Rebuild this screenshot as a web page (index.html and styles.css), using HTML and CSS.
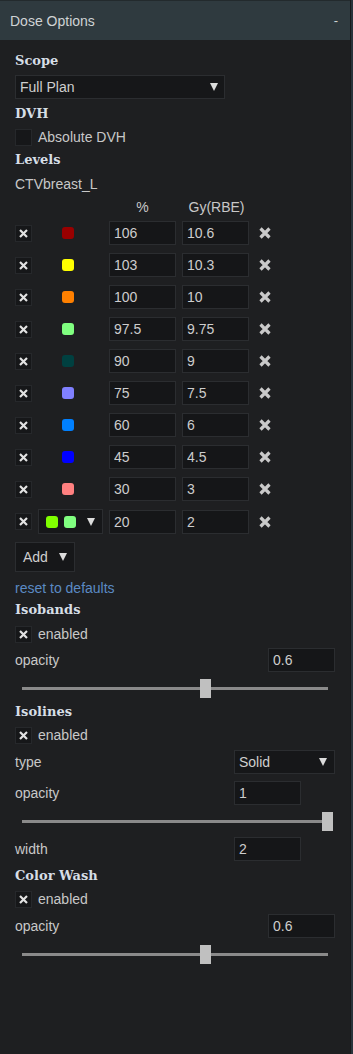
FILE: index.html
```html
<!DOCTYPE html>
<html lang="en">
<head>
    <meta charset="UTF-8">
    <meta name="viewport" content="width=device-width, initial-scale=1.0">
    <title>Dose Options</title>
    <link rel="stylesheet" href="styles.css">
</head>
<body>
    <div class="panel">
        <div class="panel-header">
            <span>Dose Options</span>
            <span class="collapse">-</span>
        </div>
        <div class="panel-body">
            <h3 class="heading">Scope</h3>
            <div class="select scope-select">
                <span>Full Plan</span>
                <span class="caret"></span>
            </div>

            <h3 class="heading mt5">DVH</h3>
            <label class="check-row mt4">
                <span class="checkbox"></span>
                <span>Absolute DVH</span>
            </label>

            <h3 class="heading mt4">Levels</h3>
            <div class="structure mt4">CTVbreast_L</div>
            <div class="level-head mt3">
                <span class="col-pct">%</span>
                <span class="col-gy">Gy(RBE)</span>
            </div>
            <div class="levels mt4" id="levels"></div>

            <div class="select add-select">
                <span>Add</span>
                <span class="caret"></span>
            </div>
            <a class="reset-link" href="#">reset to defaults</a>

            <h3 class="heading mt2">Isobands</h3>
            <label class="check-row mt5">
                <span class="checkbox checked"></span>
                <span>enabled</span>
            </label>
            <div class="field-row mt5">
                <span>opacity</span>
                <input class="text-input" type="text" value="0.6">
            </div>
            <input class="slider mt7" type="range" min="0" max="1" step="0.05" value="0.6">

            <h3 class="heading mt4">Isolines</h3>
            <label class="check-row mt4">
                <span class="checkbox checked"></span>
                <span>enabled</span>
            </label>
            <div class="field-row fixed mt6">
                <span>type</span>
                <div class="select type-select">
                    <span>Solid</span>
                    <span class="caret"></span>
                </div>
            </div>
            <div class="field-row fixed mt7">
                <span>opacity</span>
                <input class="text-input" type="text" value="1">
            </div>
            <input class="slider mt7" type="range" min="0" max="1" step="0.05" value="1">
            <div class="field-row fixed mt6">
                <span>width</span>
                <input class="text-input" type="text" value="2">
            </div>

            <h3 class="heading mt5">Color Wash</h3>
            <label class="check-row mt4">
                <span class="checkbox checked"></span>
                <span>enabled</span>
            </label>
            <div class="field-row mt6">
                <span>opacity</span>
                <input class="text-input" type="text" value="0.6">
            </div>
            <input class="slider mt7" type="range" min="0" max="1" step="0.05" value="0.6">
        </div>
    </div>

    <script>
        const levels = [
            { pct: "106", gy: "10.6", colors: ["#990000"] },
            { pct: "103", gy: "10.3", colors: ["#ffff00"] },
            { pct: "100", gy: "10", colors: ["#ff8000"] },
            { pct: "97.5", gy: "9.75", colors: ["#80ff80"] },
            { pct: "90", gy: "9", colors: ["#004040"] },
            { pct: "75", gy: "7.5", colors: ["#8080ff"] },
            { pct: "60", gy: "6", colors: ["#0080ff"] },
            { pct: "45", gy: "4.5", colors: ["#0000ff"] },
            { pct: "30", gy: "3", colors: ["#ff8080"] },
            { pct: "20", gy: "2", colors: ["#80ff00", "#80ff80"], picker: true }
        ];

        const checkX = '<svg width="9" height="9" viewBox="0 0 9 9"><path d="M1 1 L8 8 M8 1 L1 8" stroke="#e2e2e2" stroke-width="2.2"/></svg>';
        const deleteX = '<svg width="12" height="12" viewBox="0 0 12 12"><path d="M1.5 1.5 L10.5 10.5 M10.5 1.5 L1.5 10.5" stroke="#c9c9c9" stroke-width="3.2"/></svg>';

        document.querySelectorAll(".checkbox.checked").forEach(box => {
            box.innerHTML = checkX;
        });

        const list = document.getElementById("levels");
        levels.forEach(level => {
            const row = document.createElement("div");
            row.className = "level-row";

            const dots = level.colors.map(c => `<span class="dot" style="background:${c}"></span>`).join("");
            const colorCell = level.picker
                ? `<div class="color-cell picker">${dots}<span class="caret"></span></div>`
                : `<div class="color-cell">${dots}</div>`;

            row.innerHTML = `
                <span class="checkbox checked">${checkX}</span>
                ${colorCell}
                <input class="text-input" type="text" value="${level.pct}">
                <input class="text-input" type="text" value="${level.gy}">
                <span class="delete">${deleteX}</span>`;
            list.append(row);
        });
    </script>
</body>
</html>
```

FILE: styles.css
```css
*{
   margin: 0;
   padding: 0;
   box-sizing: border-box;
}

body{
   background-color: #28333b;
   font-family: "Liberation Sans", Arial, sans-serif;
   font-size: 14px;
   color: #c8c8c8;
}

.panel{
   width: 351px;
   min-height: 100vh;
   background-color: #1e1f21;
   border-right: 1px solid #17191b;
}

.panel-header{
   height: 40px;
   display: flex;
   justify-content: space-between;
   align-items: center;
   padding: 0 12px 0 10px;
   background-color: #2f3a3f;
   border-top: 1px solid #232a2d;
   color: #d0d3d5;
}

.collapse{
   font-size: 13px;
}

.panel-body{
   display: flex;
   flex-direction: column;
   align-items: flex-start;
   padding: 11px 15px 40px 15px;
}

.heading{
   font-family: "DejaVu Serif", Georgia, serif;
   font-weight: bold;
   font-size: 13px;
   line-height: 20px;
   color: #d6dee6;
}

.mt2{ margin-top: 2px; }
.mt3{ margin-top: 3px; }
.mt4{ margin-top: 4px; }
.mt5{ margin-top: 5px; }
.mt6{ margin-top: 6px; }
.mt7{ margin-top: 7px; }

.select{
   display: flex;
   align-items: center;
   justify-content: space-between;
   background-color: #161719;
   border: 1px solid #2b2d30;
   color: #cfcfcf;
   padding: 0 6px 0 4px;
   height: 24px;
}

.caret{
   flex-shrink: 0;
   width: 0;
   height: 0;
   border-left: 4px solid transparent;
   border-right: 4px solid transparent;
   border-top: 8px solid #dcdcdc;
}

.scope-select{
   width: 210px;
   margin-top: 4px;
}

.add-select{
   width: 60px;
   height: 30px;
   margin-top: 9px;
   padding: 0 7px 0 7px;
}

.type-select{
   width: 101px;
   padding-right: 7px;
}

.check-row{
   display: flex;
   align-items: center;
   gap: 6px;
   height: 18px;
}

.checkbox{
   display: flex;
   align-items: center;
   justify-content: center;
   width: 17px;
   height: 17px;
   background-color: #161719;
   border: 1px solid #26282b;
}

.structure{
   line-height: 20px;
}

.level-head{
   display: flex;
   line-height: 20px;
}

.col-pct{
   width: 67px;
   margin-left: 94px;
   text-align: center;
}

.col-gy{
   width: 67px;
   margin-left: 7px;
   text-align: center;
}

.levels{
   display: flex;
   flex-direction: column;
   gap: 8px;
}

.level-row{
   display: grid;
   grid-template-columns: 17px 65px 67px 67px 16px;
   column-gap: 6px;
   align-items: center;
   height: 24px;
}

.level-row .delete{
   display: flex;
   padding-left: 4px;
}

.level-row .delete svg{
   flex-shrink: 0;
}

.color-cell{
   display: flex;
   align-items: center;
   height: 24px;
   padding-left: 24px;
}

.color-cell.picker{
   gap: 6px;
   height: 25px;
   padding: 0 7px 0 7px;
   background-color: #161719;
   border: 1px solid #2b2d30;
}

.color-cell.picker .caret{
   margin-left: auto;
}

.dot{
   display: inline-block;
   flex-shrink: 0;
   width: 12px;
   height: 12px;
   border-radius: 3px;
}

.text-input{
   width: 67px;
   height: 24px;
   padding: 0 4px;
   background-color: #151618;
   border: 1px solid #2b2d30;
   color: #cdcdcd;
   font-family: "Liberation Sans", Arial, sans-serif;
   font-size: 14px;
   outline: none;
}

.reset-link{
   margin-top: 6px;
   line-height: 20px;
   color: #5b8ac4;
   text-decoration: none;
}

.field-row{
   display: flex;
   align-items: center;
   justify-content: space-between;
   width: 320px;
   height: 24px;
}

.field-row.fixed{
   display: grid;
   grid-template-columns: 219px auto;
   justify-content: start;
}

.slider{
   -webkit-appearance: none;
   appearance: none;
   width: 316px;
   height: 19px;
   margin-left: 2px;
   background: linear-gradient(#8a8a8a, #8a8a8a) no-repeat center / 306px 3px;
   outline: none;
}

.slider::-webkit-slider-runnable-track{
   height: 19px;
   background: transparent;
}

.slider::-webkit-slider-thumb{
   -webkit-appearance: none;
   width: 11px;
   height: 19px;
   background-color: #c0c0c0;
   border: none;
   border-radius: 0;
}
```
